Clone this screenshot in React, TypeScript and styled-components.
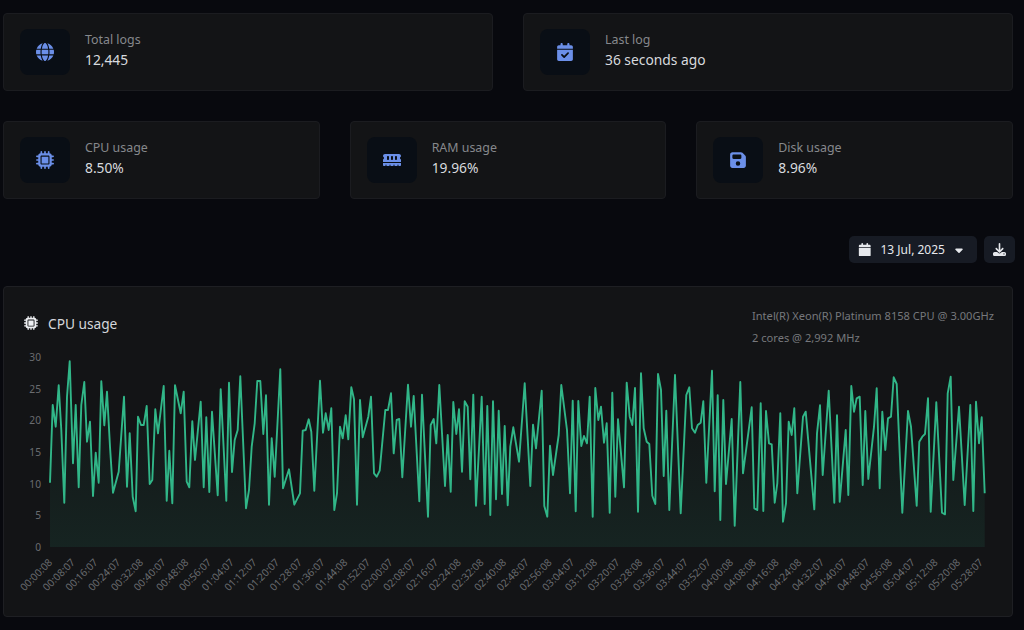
import React from "react";
import styled, { createGlobalStyle } from "styled-components";
import {
  FaGlobe,
  FaCalendarCheck,
  FaMicrochip,
  FaMemory,
  FaFloppyDisk,
  FaCalendar,
  FaCaretDown,
  FaDownload,
} from "react-icons/fa6";

const Global = createGlobalStyle`
  html, body { margin: 0; padding: 0; background: #08090e; height: 100%; overflow: hidden; }
  body { font-family: "Noto Sans", "Open Sans", sans-serif; }
`;

const Page = styled.div`
  display: flex;
  flex-direction: column;
  height: 630px;
  box-sizing: border-box;
  padding: 13px 11px 0 3px;
`;

const CardRow = styled.div<{ $cols: number }>`
  display: grid;
  grid-template-columns: repeat(${(p) => p.$cols}, 1fr);
  gap: 30px;
  margin-bottom: 30px;
`;

const StatCard = styled.div`
  display: flex;
  align-items: center;
  gap: 15px;
  height: 78px;
  box-sizing: border-box;
  padding: 0 16px;
  background: #131416;
  border: 1px solid #1b1c20;
  border-radius: 4px;
`;

const IconBox = styled.div`
  display: flex;
  align-items: center;
  justify-content: center;
  width: 50px;
  height: 46px;
  border-radius: 8px;
  background: #090e15;
  color: #6b8fe8;
  font-size: 18px;
`;

const StatText = styled.div`
  display: flex;
  flex-direction: column;
  gap: 1px;
  margin-bottom: 4px;
`;

const StatLabel = styled.div`
  font-size: 12.4px;
  line-height: 18px;
  color: #86888c;
`;

const StatValue = styled.div`
  font-size: 13.8px;
  line-height: 20px;
  color: #d8dade;
`;

const Toolbar = styled.div`
  display: flex;
  justify-content: flex-end;
  gap: 7px;
  margin: 7px -2px 23px 0;
`;

const DateButton = styled.div`
  display: flex;
  align-items: center;
  width: 128px;
  height: 27px;
  box-sizing: border-box;
  padding: 0 12px 0 9px;
  border-radius: 5px;
  background: #171b24;
  color: #e6e8ec;
  font-size: 12px;

  svg:first-child {
    font-size: 13.5px;
  }
`;

const DateText = styled.span`
  margin-left: 9px;
  flex: 1;
  white-space: nowrap;
`;

const IconButton = styled.div`
  display: flex;
  align-items: center;
  justify-content: center;
  width: 31px;
  height: 27px;
  border-radius: 5px;
  background: #171b24;
  color: #e6e8ec;
  font-size: 13px;
`;

const ChartCard = styled.div`
  height: 331px;
  box-sizing: border-box;
  background: #131416;
  border: 1px solid #1e1f23;
  border-radius: 4px;
`;

const ChartHeader = styled.div`
  display: flex;
  justify-content: space-between;
  align-items: flex-start;
  height: 45px;
  padding: 18px 17px 0 20px;
`;

const ChartTitle = styled.div`
  display: flex;
  align-items: center;
  gap: 10px;
  margin-top: 7px;
  height: 22px;
  color: #d4d6da;
  font-size: 13.7px;

  svg {
    font-size: 14px;
    color: #eef0f3;
  }
`;

const ChartInfo = styled.div`
  width: 243px;
  font-size: 11.1px;
  line-height: 22px;
  color: #76787c;
  white-space: nowrap;
`;

const ChartSvg = styled.svg`
  display: block;
  width: 1008px;
  height: 266px;
`;

const AxisText = styled.text`
  font-family: "Noto Sans", "Open Sans", sans-serif;
  font-size: 10.2px;
  fill: #6a6c70;
`;

type P = [number, number];
const seg = (x0: number, y0: number, pts: P[]): P[] =>
  pts.map(([x, y]) => [x0 + x / 3, y0 + y / 3]);

const points: P[] = [
  ...seg(0, 280, [
    [150, 608],[158, 375],[167, 440],[176, 316],[184, 450],[193, 668],[201, 350],[209, 244],[219, 550],[227, 375],[236, 622],[244, 375],[253, 306],[261, 485],[270, 425],[279, 648],[287, 518],[296, 608],[304, 304],[313, 436],[321, 335],[330, 500],[339, 638],[356, 575],[372, 350],[381, 620],[389, 460],[398, 650],[407, 694],[414, 410],[423, 435],[431, 435],[440, 378],[449, 612],[457, 600],[466, 388],[474, 460],[491, 318],[500, 662],[508, 512],[517, 670],[525, 316],[542, 400],[551, 335],[560, 605],[568, 622],[577, 424],[585, 540],[602, 365],[611, 622],[619, 412],[628, 636],[636, 395],[653, 646],[662, 328],[679, 662],[687, 308],[696, 576],[704, 480],[713, 450],[721, 289],[738, 685],[747, 630],[755, 500],[764, 430],[772, 303],
  ]),
  ...seg(250, 350, [
    [31, 93],[40, 252],[48, 136],[57, 464],[65, 265],[74, 380],[91, 58],[99, 415],[117, 358],[133, 464],[150, 430],[158, 242],[167, 240],[176, 208],[184, 245],[193, 422],[210, 92],[219, 248],[227, 190],[236, 240],[244, 175],[253, 480],[261, 430],[270, 230],[278, 265],[287, 196],[295, 268],[304, 112],[312, 148],[321, 464],[330, 150],[338, 262],[355, 200],[363, 140],[372, 370],[380, 380],[389, 362],[406, 180],[414, 180],[423, 130],[431, 310],[440, 210],[448, 207],[457, 382],[474, 104],[483, 230],[491, 138],[508, 454],[516, 134],[534, 500],[542, 225],[551, 207],[559, 280],[568, 105],[585, 408],[593, 255],[602, 425],[610, 156],[619, 252],[627, 178],[636, 365],[644, 154],[653, 170],[661, 388],[670, 134],[678, 467],[695, 140],[704, 462],[712, 168],[721, 495],[729, 154],[738, 448],[746, 182],
  ]),
  ...seg(500, 350, [
    [6, 432],[14, 228],[23, 466],[31, 290],[40, 232],[57, 335],[74, 100],[91, 408],[99, 224],[108, 295],[125, 122],[133, 468],[142, 500],[150, 287],[159, 375],[176, 255],[184, 105],[201, 240],[210, 430],[218, 152],[227, 484],[235, 153],[244, 288],[252, 258],[261, 280],[269, 140],[278, 500],[286, 114],[295, 210],[303, 170],[312, 278],[320, 220],[329, 488],[337, 128],[346, 440],[354, 208],[372, 412],[380, 98],[389, 200],[397, 225],[405, 114],[414, 485],[423, 70],[431, 235],[440, 275],[448, 282],[457, 437],[466, 462],[474, 72],[483, 120],[491, 378],[499, 182],[508, 480],[525, 75],[542, 490],[559, 135],[568, 112],[576, 235],[585, 248],[593, 225],[602, 218],[610, 154],[619, 398],[636, 62],[644, 424],[653, 136],[661, 510],[670, 150],[678, 402],[695, 207],[704, 527],[721, 96],[729, 370],[755, 172],[763, 475],[772, 480],
  ]),
  ...seg(750, 350, [
    [32, 160],[40, 483],[48, 183],[57, 280],[65, 283],[74, 458],[82, 400],[91, 190],[99, 515],[108, 460],[116, 215],[125, 255],[133, 175],[142, 430],[159, 200],[167, 185],[193, 478],[201, 250],[210, 166],[218, 375],[236, 122],[253, 458],[261, 196],[269, 455],[287, 240],[295, 435],[304, 108],[312, 185],[320, 145],[329, 140],[338, 405],[346, 183],[355, 387],[372, 230],[380, 115],[389, 415],[397, 185],[406, 300],[414, 205],[423, 200],[431, 82],[440, 102],[457, 488],[474, 183],[483, 230],[500, 467],[508, 275],[517, 260],[525, 252],[534, 145],[542, 485],[559, 157],[576, 488],[585, 493],[593, 130],[602, 80],[610, 390],[627, 170],[644, 465],[661, 165],[670, 483],[678, 155],[687, 280],[695, 202],[704, 430],
  ]),
];

const linePath = points.map(([x, y]) => `${x.toFixed(1)},${y.toFixed(1)}`).join(" ");
const areaPath = `50,547 ${linePath} 984.7,547`;

const xLabels = [
  "00:00:08","00:08:07","00:16:07","00:24:07","00:32:08","00:40:07","00:48:08","00:56:07","01:04:07","01:12:07","01:20:07","01:28:07","01:36:07","01:44:08","01:52:07","02:00:07","02:08:07","02:16:07","02:24:08","02:32:08","02:40:08","02:48:07","02:56:08","03:04:07","03:12:08","03:20:07","03:28:08","03:36:07","03:44:07","03:52:07","04:00:08","04:08:08","04:16:08","04:24:08","04:32:07","04:40:07","04:48:07","04:56:08","05:04:07","05:12:08","05:20:08","05:28:07",
];

const Stat = ({ icon, label, value }: { icon: React.ReactNode; label: string; value: string }) => (
  <StatCard>
    <IconBox>{icon}</IconBox>
    <StatText>
      <StatLabel>{label}</StatLabel>
      <StatValue>{value}</StatValue>
    </StatText>
  </StatCard>
);

export default function App() {
  return (
    <>
      <Global />
      <Page>
        <CardRow $cols={2}>
          <Stat icon={<FaGlobe />} label="Total logs" value="12,445" />
          <Stat icon={<FaCalendarCheck />} label="Last log" value="36 seconds ago" />
        </CardRow>
        <CardRow $cols={3}>
          <Stat icon={<FaMicrochip />} label="CPU usage" value="8.50%" />
          <Stat icon={<FaMemory />} label="RAM usage" value="19.96%" />
          <Stat icon={<FaFloppyDisk />} label="Disk usage" value="8.96%" />
        </CardRow>
        <Toolbar>
          <DateButton>
            <FaCalendar />
            <DateText>13 Jul, 2025</DateText>
            <FaCaretDown />
          </DateButton>
          <IconButton>
            <FaDownload />
          </IconButton>
        </Toolbar>
        <ChartCard>
          <ChartHeader>
            <ChartTitle>
              <FaMicrochip />
              CPU usage
            </ChartTitle>
            <ChartInfo>
              <div>Intel(R) Xeon(R) Platinum 8158 CPU @ 3.00GHz</div>
              <div>2 cores @ 2,992 MHz</div>
            </ChartInfo>
          </ChartHeader>
          <ChartSvg viewBox="4 350 1008 266">
            <defs>
              <linearGradient id="area" x1="0" y1="0" x2="0" y2="1">
                <stop offset="0%" stopColor="#2fb286" stopOpacity="0" />
                <stop offset="35%" stopColor="#2fb286" stopOpacity="0.03" />
                <stop offset="100%" stopColor="#2fb286" stopOpacity="0.1" />
              </linearGradient>
            </defs>
            <polygon points={areaPath} fill="url(#area)" />
            <polyline points={linePath} fill="none" stroke="#31b688" strokeWidth="1.9" strokeLinejoin="round" />
            {[0, 5, 10, 15, 20, 25, 30].map((v) => (
              <AxisText key={v} x={41} y={547 - v * 6.33 + 4} textAnchor="end">
                {v}
              </AxisText>
            ))}
            {xLabels.map((t, i) => {
              const x = 53 + i * 22.7;
              return (
                <AxisText key={t} x={x} y={563} textAnchor="end" transform={`rotate(-45 ${x} 563)`}>
                  {t}
                </AxisText>
              );
            })}
          </ChartSvg>
        </ChartCard>
      </Page>
    </>
  );
}
